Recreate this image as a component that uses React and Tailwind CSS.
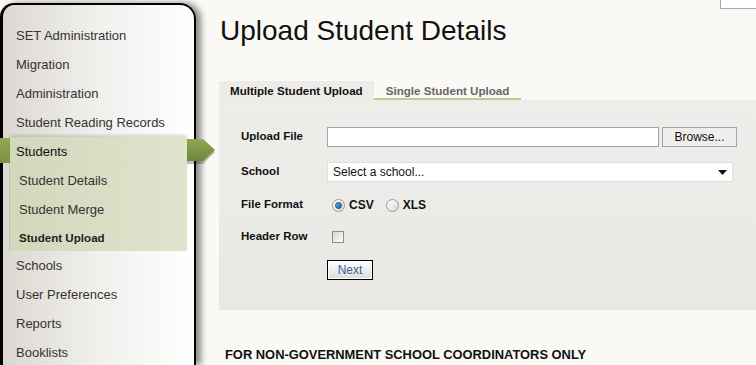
import { useState } from 'react';

const font = { fontFamily: '"Liberation Sans", Arial, sans-serif' };

const topItems = ['SET Administration', 'Migration', 'Administration', 'Student Reading Records'];
const bottomItems = ['Schools', 'User Preferences', 'Reports', 'Booklists'];

function MenuRow({ label }) {
  return (
    <div className="h-[29px] flex items-center pl-[13px] text-[13px] text-[#333]">
      {label}
    </div>
  );
}

function Sidebar() {
  return (
    <aside className="relative z-10 w-[196px] shrink-0 pt-[3px]">
      <div className="h-full border-l-[3px] border-t-2 border-r-2 border-black rounded-tl-[14px] rounded-tr-[16px] bg-gradient-to-r from-[#dcd8d1] via-[#f1f0ed] to-white shadow-[5px_0_6px_rgba(0,0,0,0.45)] pt-[16px]">
        {topItems.map((item) => (
          <MenuRow key={item} label={item} />
        ))}

        {/* active group */}
        <div className="relative ml-[6px] mr-[7px] h-[114px] bg-gradient-to-r from-[#d2d8bb] to-[#dfe4cd] border-l border-[#c3c7b4]">
          <div className="absolute left-[-10px] top-[1px] w-[10px] h-[25px] bg-gradient-to-b from-[#93a655] to-[#7b9140]" />
          <svg className="absolute left-full top-[2px]" width="29" height="26" viewBox="0 0 29 26">
            <polygon points="0,3 16,3 28,13 16,25 0,25" fill="rgba(0,0,0,0.25)" />
            <defs>
              <linearGradient id="arr" x1="0" y1="0" x2="0" y2="1">
                <stop offset="0" stopColor="#8fa653" />
                <stop offset="1" stopColor="#6e8738" />
              </linearGradient>
            </defs>
            <polygon points="0,0 16,0 28,11 16,22 0,22" fill="url(#arr)" />
          </svg>
          <div className="h-[29px] flex items-center pl-[6px] text-[13px] text-[#111] shadow-[0_-2px_3px_rgba(0,0,0,0.15)]">
            Students
          </div>
          <div className="h-[29px] flex items-center pl-[9px] text-[13px] text-[#333]">Student Details</div>
          <div className="h-[29px] flex items-center pl-[9px] text-[13px] text-[#333]">Student Merge</div>
          <div className="h-[27px] flex items-center pl-[9px] text-[11.6px] font-bold text-[#222]">Student Upload</div>
        </div>

        {bottomItems.map((item) => (
          <MenuRow key={item} label={item} />
        ))}
      </div>
    </aside>
  );
}

function Radio({ checked, label, onClick }) {
  return (
    <button onClick={onClick} className="flex items-center gap-[4px]">
      <span className="w-[13px] h-[13px] rounded-full border border-[#9a9a9a] bg-gradient-to-br from-white to-[#d8d8d8] flex items-center justify-center">
        {checked && <span className="w-[7px] h-[7px] rounded-full bg-gradient-to-br from-[#6fb1e6] to-[#1f5f9e] border border-[#174a80]" />}
      </span>
      <span className="text-[12px] font-bold text-[#111]">{label}</span>
    </button>
  );
}

export default function App() {
  const [tab, setTab] = useState('multi');
  const [format, setFormat] = useState('csv');
  const [header, setHeader] = useState(false);

  const tabClass = (id) =>
    tab === id ? 'px-[11px] bg-[#eeece9] text-[#111]' : 'px-[12px] text-[#666] border-b-2 border-[#bccb8c]';

  return (
    <div className="relative w-[756px] h-[365px] overflow-hidden flex bg-[#faf9f5]" style={font}>
      <Sidebar />

      <div className="absolute right-0 top-0 w-[36px] h-[9px] bg-white border-l border-b border-[#a9a9a9]" />

      <main className="flex-1 flex flex-col">
        <h1 className="pl-[24px] pt-[15px] text-[28px] leading-[32px] text-[#111]">Upload Student Details</h1>

        <div className="ml-[23px] mt-[34px] flex h-[19px] text-[11.6px] font-bold leading-[19px]">
          <button onClick={() => setTab('multi')} className={tabClass('multi')}>
            Multiple Student Upload
          </button>
          <button onClick={() => setTab('single')} className={tabClass('single')}>
            Single Student Upload
          </button>
        </div>

        <section className="ml-[23px] h-[210px] bg-gradient-to-b from-[#eeedea] to-[#e9e8e4] pl-[22px] pt-[27px] text-[11.5px]">
          <div className="flex items-center h-[20px]">
            <span className="w-[86px] font-bold text-[#111]">Upload File</span>
            <div className="w-[332px] h-[20px] bg-white border border-[#a59cb6]" />
            <button className="ml-[3px] w-[75px] h-[20px] bg-[#efeeec] border border-[#a59cb6] text-[12px] text-[#111]">
              Browse...
            </button>
          </div>

          <div className="flex items-center h-[20px] mt-[15px]">
            <span className="w-[86px] font-bold text-[#111]">School</span>
            <div className="w-[406px] h-[20px] bg-white border border-[#dedede] flex items-center justify-between pl-[5px] pr-[5px]">
              <span className="text-[12px] text-[#111]">Select a school...</span>
              <svg width="9" height="5" viewBox="0 0 9 5">
                <polygon points="0,0 9,0 4.5,5" fill="#111" />
              </svg>
            </div>
          </div>

          <div className="flex items-center h-[20px] mt-[13px]">
            <span className="w-[91px] font-bold text-[#111]">File Format</span>
            <div className="flex items-center gap-[12px]">
              <Radio checked={format === 'csv'} label="CSV" onClick={() => setFormat('csv')} />
              <Radio checked={format === 'xls'} label="XLS" onClick={() => setFormat('xls')} />
            </div>
          </div>

          <div className="flex items-center h-[20px] mt-[12px]">
            <span className="w-[91px] font-bold text-[#111]">Header Row</span>
            <button
              onClick={() => setHeader(!header)}
              className="w-[12px] h-[12px] border border-[#8e8e8e] bg-gradient-to-br from-[#d6d6d6] to-white flex items-center justify-center text-[10px] leading-none"
            >
              {header ? '✓' : ''}
            </button>
          </div>

          <button className="ml-[86px] mt-[13px] w-[46px] h-[20px] border border-black shadow-[inset_0_0_0_1px_#fff] bg-gradient-to-b from-white to-[#dcdcdc] text-[12px] text-[#3a5f99]">
            Next
          </button>
        </section>

        <p className="pl-[29px] mt-[35px] text-[12.9px] font-bold text-[#111]">
          FOR NON-GOVERNMENT SCHOOL COORDINATORS ONLY
        </p>
      </main>
    </div>
  );
}
